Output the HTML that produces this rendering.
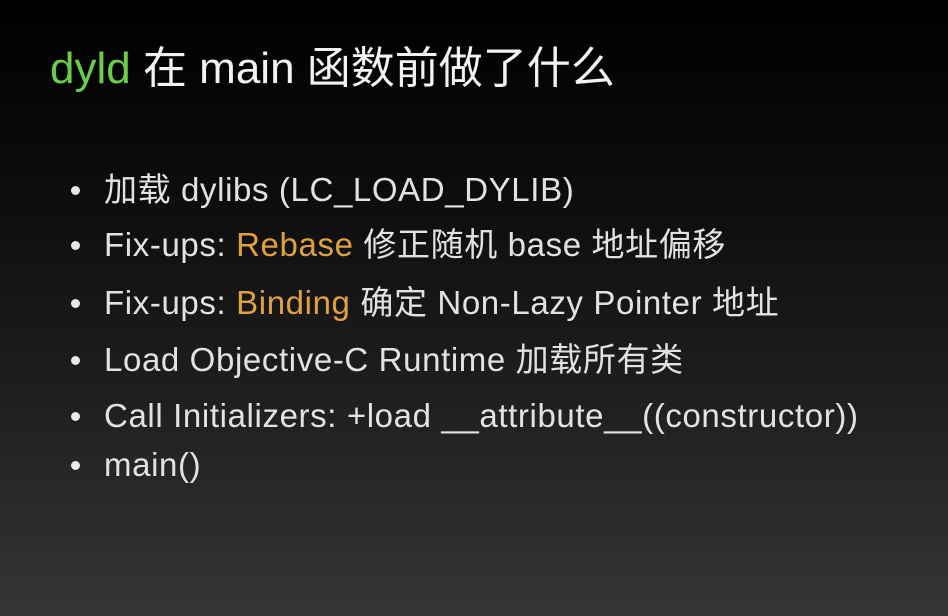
<!DOCTYPE html>
<html><head><meta charset="utf-8"><style>
html,body{margin:0;padding:0}
body{width:948px;height:616px;overflow:hidden;background:linear-gradient(180deg,#000 0%,#0c0c0c 30%,#1f1f1f 65%,#353535 100%);font-family:"Liberation Sans","Noto Sans CJK SC",sans-serif;color:#e2e2e2;position:relative}
.t{position:absolute;left:50px;top:44px;font-size:44px;line-height:50px;white-space:nowrap;color:#f2f2f2}
.g{color:#6ccb48}.o{color:#e0a03e}
.l{position:absolute;left:104px;font-size:33px;line-height:36px;white-space:nowrap;letter-spacing:0.62px}
.l:before{content:"";position:absolute;left:-33px;top:14px;width:9px;height:9px;border-radius:50%;background:#e8e8e8}
</style></head><body>
<div class="t"><span class="g">dyld</span> 在 main 函数前做了什么</div>
<div class="l" style="top:172px">加载 dylibs (LC_LOAD_DYLIB)</div>
<div class="l" style="top:227px">Fix-ups: <span class="o">Rebase</span> 修正随机 base 地址偏移</div>
<div class="l" style="top:285px">Fix-ups: <span class="o">Binding</span> 确定 Non-Lazy Pointer 地址</div>
<div class="l" style="top:342px">Load Objective-C Runtime 加载所有类</div>
<div class="l" style="top:398px">Call Initializers: +load __attribute__((constructor))</div>
<div class="l" style="top:447px">main()</div>
</body></html>
